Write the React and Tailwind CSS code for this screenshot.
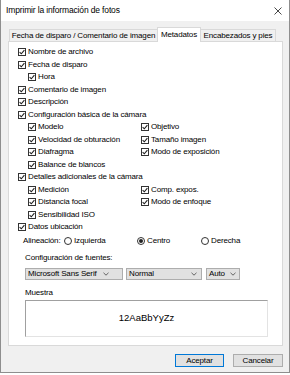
const Check = () => (
  <span className="w-[8px] h-[8px] border border-[#333] bg-white flex items-center justify-center shrink-0">
    <svg width="6" height="6" viewBox="0 0 6 6">
      <path d="M0.6 3.1 L2.3 4.8 L5.4 1.1" fill="none" stroke="#222" strokeWidth="1.1" />
    </svg>
  </span>
);

const Item = ({ label, className = "" }) => (
  <div className={"flex items-center gap-[2px] h-[12.5px] " + className}>
    <Check />
    <span className="whitespace-nowrap">{label}</span>
  </div>
);

const Pair = ({ left, right }) => (
  <div className="flex pl-[10px]">
    <div className="w-[113px]">{left && <Item label={left} />}</div>
    {right && <Item label={right} />}
  </div>
);

const Radio = ({ label, selected, className = "" }) => (
  <div className={"flex items-center gap-[2px] " + className}>
    <span className="w-[8px] h-[8px] rounded-full border border-[#333] bg-white flex items-center justify-center shrink-0">
      {selected && <span className="w-[4px] h-[4px] rounded-full bg-[#222]" />}
    </span>
    <span className="whitespace-nowrap">{label}</span>
  </div>
);

const Chevron = () => (
  <svg width="6" height="4" viewBox="0 0 6 4">
    <path d="M0.5 0.8 L3 3.2 L5.5 0.8" fill="none" stroke="#555" strokeWidth="0.9" />
  </svg>
);

const Select = ({ value, className = "" }) => (
  <div className={"h-[12px] bg-[#e1e1e1] border border-[#adadad] flex items-center justify-between pl-[2px] " + className}>
    <span className="whitespace-nowrap">{value}</span>
    <Chevron />
  </div>
);

export default function App() {
  return (
    <div className="w-[290px] h-[375px] bg-white overflow-hidden text-[8px] tracking-[-0.15px] text-black" style={{ fontFamily: '"Liberation Sans", Arial, sans-serif' }}>
      <div className="h-[373px] bg-[#f0f0f0] border-x border-b border-[#8e8e8e] flex flex-col">
        {/* title bar */}
        <div className="h-[21px] bg-white flex items-center justify-between pl-[5px] pr-[7px] shrink-0">
          <span className="text-[8.5px]">Imprimir la información de fotos</span>
          <svg width="8" height="8" viewBox="0 0 8 8">
            <path d="M0.5 0.5 L7.5 7.5 M7.5 0.5 L0.5 7.5" stroke="#333" strokeWidth="0.9" />
          </svg>
        </div>

        <div className="pl-[7px] pr-[6px] mt-[6px]">
          {/* tabs */}
          <div className="flex items-end h-[14px] pl-[1px]">
            <div className="h-[12px] w-[149px] bg-[#f0f0f0] border border-b-0 border-[#d9d9d9] flex items-center justify-center whitespace-nowrap">
              Fecha de disparo / Comentario de imagen
            </div>
            <div className="h-[15px] w-[44px] bg-white border border-b-0 border-[#d9d9d9] flex items-center justify-center relative z-10 -mb-px -mx-px whitespace-nowrap">
              Metadatos
            </div>
            <div className="h-[12px] w-[76px] bg-[#f0f0f0] border border-b-0 border-[#d9d9d9] flex items-center justify-center whitespace-nowrap">
              Encabezados y pies
            </div>
          </div>

          {/* panel */}
          <div className="h-[305px] bg-white border border-[#d9d9d9] pt-[4px]">
            <div className="pl-[9px]">
              <Item label="Nombre de archivo" />
              <Item label="Fecha de disparo" />
              <Item label="Hora" className="pl-[10px]" />
              <Item label="Comentario de imagen" />
              <Item label="Descripción" />
              <Item label="Configuración básica de la cámara" />
              <Pair left="Modelo" right="Objetivo" />
              <Pair left="Velocidad de obturación" right="Tamaño imagen" />
              <Pair left="Diafragma" right="Modo de exposición" />
              <Pair left="Balance de blancos" />
              <Item label="Detalles adicionales de la cámara" />
              <Pair left="Medición" right="Comp. expos." />
              <Pair left="Distancia focal" right="Modo de enfoque" />
              <Pair left="Sensibilidad ISO" />
              <Item label="Datos ubicación" />
            </div>

            <div className="flex items-center h-[13px] mt-[1px] pl-[14px]">
              <span className="w-[41px] whitespace-nowrap">Alineación:</span>
              <Radio label="Izquierda" className="w-[73px]" />
              <Radio label="Centro" selected className="w-[64px]" />
              <Radio label="Derecha" />
            </div>

            <div className="pl-[16px] mt-[4px] h-[12px] flex items-center">Configuración de fuentes:</div>
            <div className="pl-[16px] mt-[4px] flex">
              <Select value="Microsoft Sans Serif" className="w-[98px] pr-[13px]" />
              <Select value="Normal" className="w-[76px] ml-[3px] pr-[4px]" />
              <Select value="Auto" className="w-[34px] ml-[4px] pr-[3px]" />
            </div>

            <div className="pl-[16px] mt-[7px] h-[12px] flex items-center">Muestra</div>
            <div className="pl-[16px] mt-[1px]">
              <div className="w-[243px] h-[37px] bg-white border border-t-[#a0a0a0] border-l-[#a0a0a0] border-b-[#e3e3e3] border-r-[#e3e3e3] flex items-center justify-center text-[9.5px] tracking-normal">
                12AaBbYyZz
              </div>
            </div>
          </div>

          {/* buttons */}
          <div className="flex justify-end gap-[9px] mt-[8px]">
            <button className="w-[49px] h-[13px] bg-[#e1e1e1] border border-[#0078d7] flex items-center justify-center">Aceptar</button>
            <button className="w-[50px] h-[13px] bg-[#e1e1e1] border border-[#adadad] flex items-center justify-center">Cancelar</button>
          </div>
        </div>
      </div>
    </div>
  );
}
